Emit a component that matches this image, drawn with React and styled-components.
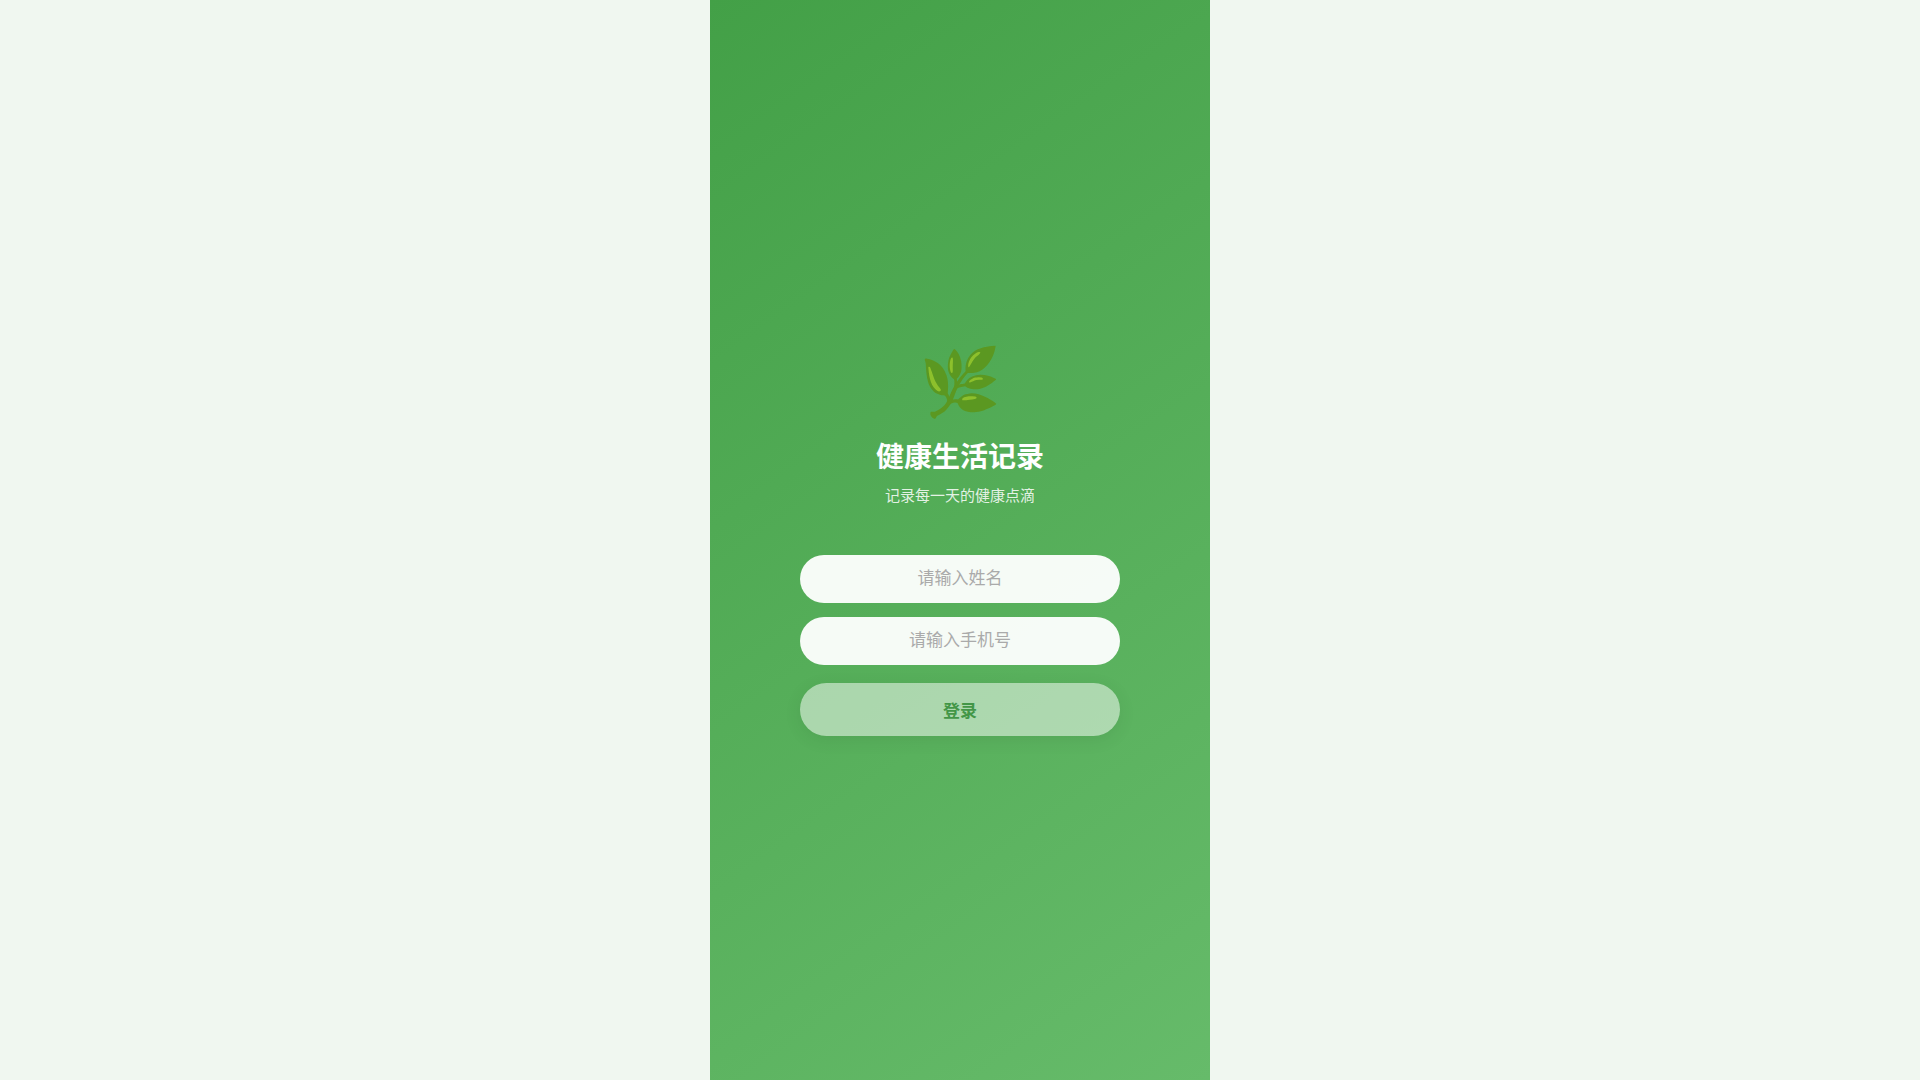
import React from 'react';
import styled, { createGlobalStyle } from 'styled-components';

const Global = createGlobalStyle`
  * { box-sizing: border-box; }
  html, body { margin: 0; height: 100%; }
  body {
    background: #f0f7f0;
    font-family: "Liberation Sans", "Noto Sans CJK SC", sans-serif;
  }
`;

const Page = styled.main`
  width: 500px;
  height: 1080px;
  margin: 0 auto;
  padding-top: 1px;
  background: linear-gradient(145deg, #43a047 0%, #66bb6a 100%);
  display: flex;
  flex-direction: column;
  align-items: center;
  justify-content: center;
`;

const Logo = styled.div`
  font-size: 66px;
  line-height: 76px;
  margin-bottom: 17px;
  font-family: "Noto Color Emoji", sans-serif;
`;

const Title = styled.h1`
  margin: 0 0 7px;
  font-size: 28px;
  line-height: 40px;
  font-weight: 700;
  color: #fff;
`;

const Subtitle = styled.p`
  margin: 0 0 48px;
  font-size: 15px;
  line-height: 22px;
  color: rgba(255, 255, 255, 0.85);
`;

const Form = styled.form`
  width: 320px;
  display: flex;
  flex-direction: column;
`;

const Input = styled.input`
  width: 100%;
  height: 48px;
  margin-bottom: 14px;
  border: none;
  border-radius: 24px;
  background: rgba(255, 255, 255, 0.95);
  text-align: center;
  font-family: inherit;
  font-size: 17px;
  color: #333;
  outline: none;
  &::placeholder { color: #aaa; }
`;

const Submit = styled.button`
  width: 100%;
  height: 53px;
  margin-top: 4px;
  padding-bottom: 2px;
  border: none;
  border-radius: 27px;
  background: #fff;
  color: #2e7d32;
  font-family: inherit;
  font-size: 17px;
  font-weight: 700;
  opacity: 0.5;
  box-shadow: 0 4px 16px rgba(0, 0, 0, 0.12);
`;

export default function App() {
  return (
    <>
      <Global />
      <Page>
        <Logo>🌿</Logo>
        <Title>健康生活记录</Title>
        <Subtitle>记录每一天的健康点滴</Subtitle>
        <Form onSubmit={(e) => e.preventDefault()}>
          <Input placeholder="请输入姓名" />
          <Input placeholder="请输入手机号" />
          <Submit type="submit" disabled>登录</Submit>
        </Form>
      </Page>
    </>
  );
}
